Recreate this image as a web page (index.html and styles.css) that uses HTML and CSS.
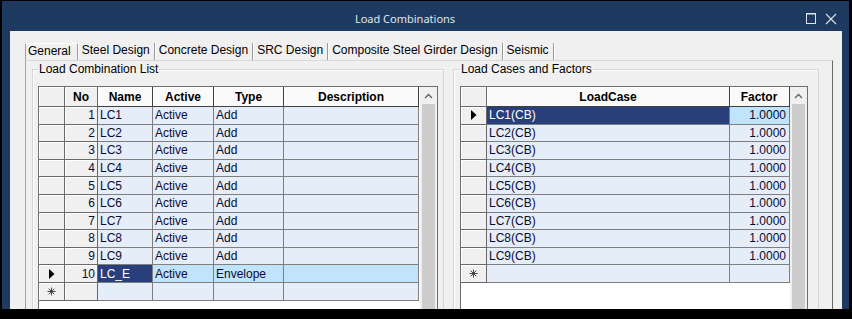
FILE: index.html
```
<!DOCTYPE html>
<html lang="en">

<head>
    <meta charset="UTF-8">
    <meta name="viewport" content="width=device-width, initial-scale=1.0">
    <title>Load Combinations</title>
    <link rel="stylesheet" href="styles.css">
</head>

<body>
    <div class="window">

        <div class="titlebar">
            <div class="title">Load Combinations</div>
            <div class="controls">
                <svg class="btn-max" width="11" height="11" viewBox="0 0 11 11">
                    <rect x="0.5" y="0.5" width="9" height="10" fill="none" stroke="#dde3ea" />
                    <line x1="0.5" y1="1" x2="9.5" y2="1" stroke="#dde3ea" />
                </svg>
                <svg class="btn-close" width="12" height="12" viewBox="0 0 12 12">
                    <path d="M1 1L11 11M11 1L1 11" stroke="#dde3ea" stroke-width="1.1" />
                </svg>
            </div>
        </div>

        <div class="content">

            <div class="tabs">
                <div class="tab active">General</div>
                <div class="tab">Steel Design</div>
                <div class="tab">Concrete Design</div>
                <div class="tab">SRC Design</div>
                <div class="tab">Composite Steel Girder Design</div>
                <div class="tab">Seismic</div>
            </div>

            <div class="page">

                <!-- left group: combination list -->
                <fieldset class="group group-list">
                    <legend>Load Combination List</legend>
                    <div class="grid grid-list">
                        <div class="sheet">
                            <div class="row head">
                                <span class="cell c-ind"></span>
                                <span class="cell c-no">No</span>
                                <span class="cell c-name">Name</span>
                                <span class="cell c-active">Active</span>
                                <span class="cell c-type">Type</span>
                                <span class="cell c-desc">Description</span>
                            </div>
                            <div class="row"><span class="cell c-ind"></span><span class="cell c-no">1</span><span class="cell c-name">LC1</span><span class="cell c-active">Active</span><span class="cell c-type">Add</span><span class="cell c-desc"></span></div>
                            <div class="row"><span class="cell c-ind"></span><span class="cell c-no">2</span><span class="cell c-name">LC2</span><span class="cell c-active">Active</span><span class="cell c-type">Add</span><span class="cell c-desc"></span></div>
                            <div class="row"><span class="cell c-ind"></span><span class="cell c-no">3</span><span class="cell c-name">LC3</span><span class="cell c-active">Active</span><span class="cell c-type">Add</span><span class="cell c-desc"></span></div>
                            <div class="row"><span class="cell c-ind"></span><span class="cell c-no">4</span><span class="cell c-name">LC4</span><span class="cell c-active">Active</span><span class="cell c-type">Add</span><span class="cell c-desc"></span></div>
                            <div class="row"><span class="cell c-ind"></span><span class="cell c-no">5</span><span class="cell c-name">LC5</span><span class="cell c-active">Active</span><span class="cell c-type">Add</span><span class="cell c-desc"></span></div>
                            <div class="row"><span class="cell c-ind"></span><span class="cell c-no">6</span><span class="cell c-name">LC6</span><span class="cell c-active">Active</span><span class="cell c-type">Add</span><span class="cell c-desc"></span></div>
                            <div class="row"><span class="cell c-ind"></span><span class="cell c-no">7</span><span class="cell c-name">LC7</span><span class="cell c-active">Active</span><span class="cell c-type">Add</span><span class="cell c-desc"></span></div>
                            <div class="row"><span class="cell c-ind"></span><span class="cell c-no">8</span><span class="cell c-name">LC8</span><span class="cell c-active">Active</span><span class="cell c-type">Add</span><span class="cell c-desc"></span></div>
                            <div class="row"><span class="cell c-ind"></span><span class="cell c-no">9</span><span class="cell c-name">LC9</span><span class="cell c-active">Active</span><span class="cell c-type">Add</span><span class="cell c-desc"></span></div>
                            <div class="row">
                                <span class="cell c-ind"><svg width="6" height="10" viewBox="0 0 6 10"><polygon points="0,0 5.5,5 0,10" fill="#000" /></svg></span>
                                <span class="cell c-no">10</span>
                                <span class="cell c-name sel-dark">LC_E</span>
                                <span class="cell c-active sel-light">Active</span>
                                <span class="cell c-type sel-light">Envelope</span>
                                <span class="cell c-desc sel-light"></span>
                            </div>
                            <div class="row">
                                <span class="cell c-ind"><svg width="9" height="9" viewBox="0 0 9 9"><path d="M4.5 0.5v8M0.5 4.5h8M1.7 1.7l5.6 5.6M7.3 1.7l-5.6 5.6" stroke="#444" stroke-width="1" /></svg></span>
                                <span class="cell c-no"></span><span class="cell c-name"></span><span class="cell c-active"></span><span class="cell c-type"></span><span class="cell c-desc"></span>
                            </div>
                        </div>
                        <div class="vscroll">
                            <div class="up"><svg width="9" height="6" viewBox="0 0 9 6"><path d="M1 5L4.5 1.5L8 5" stroke="#606060" stroke-width="1.3" fill="none" /></svg></div>
                            <div class="thumb"></div>
                        </div>
                    </div>
                </fieldset>

                <!-- right group: load cases of the selected combination -->
                <fieldset class="group group-cases">
                    <legend>Load Cases and Factors</legend>
                    <div class="grid grid-cases">
                        <div class="sheet">
                            <div class="row head">
                                <span class="cell c-ind"></span>
                                <span class="cell c-case">LoadCase</span>
                                <span class="cell c-factor">Factor</span>
                            </div>
                            <div class="row">
                                <span class="cell c-ind"><svg width="6" height="10" viewBox="0 0 6 10"><polygon points="0,0 5.5,5 0,10" fill="#000" /></svg></span>
                                <span class="cell c-case sel-dark">LC1(CB)</span>
                                <span class="cell c-factor sel-light">1.0000</span>
                            </div>
                            <div class="row"><span class="cell c-ind"></span><span class="cell c-case">LC2(CB)</span><span class="cell c-factor">1.0000</span></div>
                            <div class="row"><span class="cell c-ind"></span><span class="cell c-case">LC3(CB)</span><span class="cell c-factor">1.0000</span></div>
                            <div class="row"><span class="cell c-ind"></span><span class="cell c-case">LC4(CB)</span><span class="cell c-factor">1.0000</span></div>
                            <div class="row"><span class="cell c-ind"></span><span class="cell c-case">LC5(CB)</span><span class="cell c-factor">1.0000</span></div>
                            <div class="row"><span class="cell c-ind"></span><span class="cell c-case">LC6(CB)</span><span class="cell c-factor">1.0000</span></div>
                            <div class="row"><span class="cell c-ind"></span><span class="cell c-case">LC7(CB)</span><span class="cell c-factor">1.0000</span></div>
                            <div class="row"><span class="cell c-ind"></span><span class="cell c-case">LC8(CB)</span><span class="cell c-factor">1.0000</span></div>
                            <div class="row"><span class="cell c-ind"></span><span class="cell c-case">LC9(CB)</span><span class="cell c-factor">1.0000</span></div>
                            <div class="row">
                                <span class="cell c-ind"><svg width="9" height="9" viewBox="0 0 9 9"><path d="M4.5 0.5v8M0.5 4.5h8M1.7 1.7l5.6 5.6M7.3 1.7l-5.6 5.6" stroke="#444" stroke-width="1" /></svg></span>
                                <span class="cell c-case"></span><span class="cell c-factor"></span>
                            </div>
                        </div>
                        <div class="vscroll">
                            <div class="up"><svg width="9" height="6" viewBox="0 0 9 6"><path d="M1 5L4.5 1.5L8 5" stroke="#606060" stroke-width="1.3" fill="none" /></svg></div>
                            <div class="thumb"></div>
                        </div>
                    </div>
                </fieldset>

            </div>
        </div>
    </div>
</body>

</html>
```

FILE: styles.css
```
html,
body {
    margin: 0;
    height: 319px;
    overflow: hidden;
}

body {
    background-color: #000;
    padding: 1px 3px 0 2px;
    box-sizing: border-box;
    font-family: "Liberation Sans", Arial, sans-serif;
    font-size: 12px;
}

.window {
    width: 847px;
    height: 308px;
    background-color: #1f3a60;
    padding: 0 7px 0 8px;
    box-sizing: border-box;
    overflow: hidden;
}

/* title bar */
.titlebar {
    height: 30px;
    padding-top: 5px;
    box-sizing: border-box;
    display: flex;
    align-items: center;
}

.title {
    flex: 1;
    text-align: center;
    color: #dfe5ec;
    font-family: "Noto Sans", sans-serif;
    font-size: 11px;
}

.controls {
    width: 42px;
    display: flex;
    align-items: center;
    gap: 8px;
    padding-left: 6px;
    box-sizing: border-box;
}

.controls svg {
    display: block;
}

/* dialog body */
.content {
    background-color: #f0f0f0;
    height: 300px;
    padding: 12px 0 0 15px;
    box-sizing: border-box;
}

.tabs {
    display: flex;
    height: 17px;
}

.tab {
    height: 17px;
    padding: 0 4px 2px 3px;
    line-height: 15px;
    color: #000;
    border-right: 1px solid #9a9a9a;
    box-shadow: 1px 0 0 #fff;
    margin-right: 1px;
    white-space: nowrap;
    box-sizing: border-box;
}

.tab.active {
    padding: 0 6px 2px 2px;
    line-height: 14px;
    border-left: 1px solid #a0a0a0;
    border-top: 1px solid #fff;
}

.page {
    width: 808px;
    height: 260px;
    border-top: 1px solid #dadada;
    border-left: 1px solid #a0a0a0;
    border-right: 1px solid #696969;
    box-sizing: border-box;
    display: flex;
    gap: 9px;
    padding: 1px 0 0 6px;
}

/* group boxes */
.group {
    margin: 0;
    border: 1px solid #d5d5d5;
    box-shadow: inset 1px 1px 0 #fff;
    padding: 10px 0 0 5px;
    min-width: 0;
    box-sizing: border-box;
    height: 300px;
}

.group legend {
    padding: 0 1px;
    line-height: 14px;
    color: #000;
}

.group-list {
    width: 412px;
}

.group-cases {
    width: 366px;
    padding-left: 6px;
}

/* grid control */
.grid {
    display: flex;
    height: 240px;
    border: 1px solid #6e6e6e;
    background-color: #fff;
    box-sizing: border-box;
}

.grid-list {
    width: 400px;
}

.grid-cases {
    width: 348px;
}

.sheet {
    display: flex;
    flex-direction: column;
}

.row {
    display: flex;
    height: 17.6px;
}

.row.head {
    height: 20px;
}

.cell {
    box-sizing: border-box;
    height: 100%;
    padding: 0 2px;
    display: flex;
    align-items: center;
    white-space: nowrap;
    overflow: hidden;
    background-color: #e4edf8;
    color: #0b0b30;
    border-right: 1px solid #7f7f7f;
    border-bottom: 1px solid #7f7f7f;
}

.head .cell {
    background-color: #fafafa;
    color: #000;
    font-weight: bold;
    justify-content: center;
    border-right-color: #404040;
    border-bottom-color: #404040;
    box-shadow: inset 1px 1px 0 #fff;
}

/* fixed columns */
.cell.c-ind,
.cell.c-no {
    background-color: #f0f0f0;
    border-right-color: #696969;
    border-bottom-color: #696969;
    box-shadow: inset 1px 1px 0 #fff;
}

.cell.c-ind {
    justify-content: center;
}

.c-ind {
    width: 26px;
}

.c-no {
    width: 33px;
    justify-content: flex-end;
}

.c-name {
    width: 55px;
}

.c-active {
    width: 61px;
}

.c-type {
    width: 70px;
}

.c-desc {
    width: 135px;
}

.c-case {
    width: 243px;
}

.c-factor {
    width: 60px;
    justify-content: flex-end;
    padding-right: 3px;
}

.head .c-factor {
    justify-content: center;
}

.cell.sel-dark {
    background-color: #283f7b;
    color: #fff;
}

.cell.sel-light {
    background-color: #bfe4fc;
}

/* vertical scroll bar */
.vscroll {
    width: 17px;
    margin-left: auto;
    background-color: #f0f0f0;
    display: flex;
    flex-direction: column;
}

.vscroll .up {
    height: 17px;
    display: flex;
    align-items: center;
    justify-content: center;
}

.vscroll .thumb {
    flex: 1;
    margin: 0 2px;
    background-color: #cdcdcd;
}
```
